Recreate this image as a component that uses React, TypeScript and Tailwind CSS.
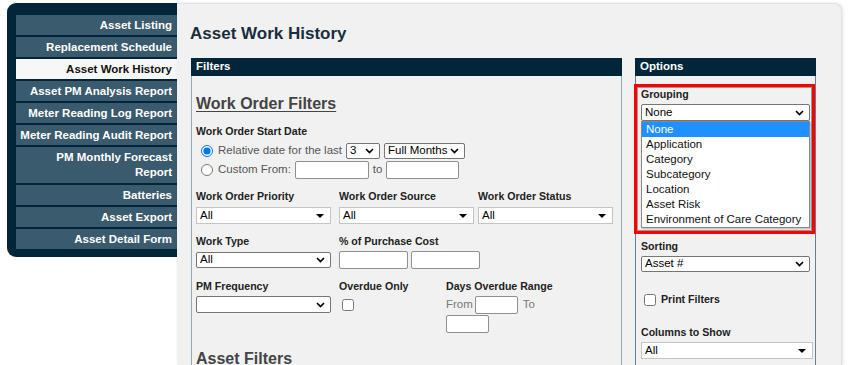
import type { ReactNode } from 'react';

const MENU = [
  'Asset Listing',
  'Replacement Schedule',
  'Asset Work History',
  'Asset PM Analysis Report',
  'Meter Reading Log Report',
  'Meter Reading Audit Report',
  'PM Monthly Forecast Report',
  'Batteries',
  'Asset Export',
  'Asset Detail Form',
];

const GROUPING = [
  'None',
  'Application',
  'Category',
  'Subcategory',
  'Location',
  'Asset Risk',
  'Environment of Care Category',
];

const Chevron = () => (
  <svg width="9" height="6" viewBox="0 0 9 6" className="shrink-0">
    <path d="M1 1l3.5 3.5L8 1" stroke="#000" strokeWidth="1.7" fill="none" />
  </svg>
);

const Triangle = () => (
  <svg width="8" height="4" viewBox="0 0 8 4" className="shrink-0">
    <path d="M0 0h8L4 4z" fill="#000" />
  </svg>
);

// native-looking chrome select with chevron
const ChevronSelect = ({ value = '', className = '' }: { value?: string; className?: string }) => (
  <div
    className={`flex items-center justify-between rounded-[2px] border border-[#767676] bg-white pl-[3px] pr-[5px] text-[11.5px] leading-none text-black ${className}`}
  >
    <span>{value}</span>
    <Chevron />
  </div>
);

// styled select with the small solid arrow
const FlatSelect = ({ value = '', className = '' }: { value?: string; className?: string }) => (
  <div
    className={`flex items-center justify-between border border-[#c4c4c4] bg-white pl-[3px] pr-[6px] text-[11.5px] leading-none text-black ${className}`}
  >
    <span>{value}</span>
    <Triangle />
  </div>
);

const TextBox = ({ className = '' }: { className?: string }) => (
  <div className={`h-[18px] rounded-[2px] border border-[#8f8f8f] bg-white ${className}`} />
);

const Label = ({ children }: { children: ReactNode }) => (
  <div className="text-[10.6px] leading-[13px] font-bold text-[#222]">{children}</div>
);

const Heading = ({ children }: { children: ReactNode }) => (
  <h2 className="text-[16px] leading-[20px] font-bold text-[#444] underline underline-offset-[2px]">{children}</h2>
);

const Sidebar = () => (
  <div className="ml-[7px] flex w-[170px] flex-col gap-[2px] self-start rounded-l-[9px] bg-[#012639] pt-[12px] pb-[8px] pl-[9px]">
    {MENU.map(item => {
      const active = item === 'Asset Work History';
      const double = item === 'PM Monthly Forecast Report';
      return (
        <div
          key={item}
          className={`flex flex-col justify-center pr-[5px] text-right text-[11.5px] font-bold whitespace-nowrap ${
            double ? 'h-[36px] leading-[15px]' : 'h-[20px] leading-[14px]'
          } ${active ? 'bg-[#f7f7f7] text-[#111]' : 'bg-[#3a5b6d] text-white'}`}
        >
          {double ? (
            <>
              <span>PM Monthly Forecast</span>
              <span>Report</span>
            </>
          ) : (
            item
          )}
        </div>
      );
    })}
  </div>
);

const FiltersPanel = () => (
  <div className="ml-[1px] flex w-[431px] flex-col">
    <div className="flex h-[18px] items-center bg-[#012639] pl-[5px] text-[11.5px] font-bold text-white">Filters</div>
    <div className="flex-1 border-x border-[#8eaabb] pl-[4px]">
      <div className="mt-[18px]">
        <Heading>Work Order Filters</Heading>
      </div>

      <div className="mt-[11px]">
        <Label>Work Order Start Date</Label>
      </div>
      <div className="mt-[5px] flex h-[16px] items-center pl-[5px] text-[11.5px] text-[#555]">
        <input type="radio" defaultChecked name="wo" className="m-0 h-[12px] w-[12px]" />
        <span className="ml-[5px]">Relative date for the last</span>
        <ChevronSelect value="3" className="ml-[4px] h-[16px] w-[34px]" />
        <ChevronSelect value="Full Months" className="ml-[4px] h-[16px] w-[81px]" />
      </div>
      <div className="mt-[2px] flex h-[18px] items-center pl-[5px] text-[11.5px] text-[#555]">
        <input type="radio" name="wo" className="m-0 h-[12px] w-[12px]" />
        <span className="ml-[5px]">Custom From:</span>
        <TextBox className="ml-[4px] w-[74px]" />
        <span className="ml-[4px]">to</span>
        <TextBox className="ml-[4px] w-[73px]" />
      </div>

      <div className="mt-[11px] grid grid-cols-[143px_139px_1fr]">
        <div>
          <Label>Work Order Priority</Label>
          <FlatSelect value="All" className="mt-[4px] h-[17px] w-[135px]" />
        </div>
        <div>
          <Label>Work Order Source</Label>
          <FlatSelect value="All" className="mt-[4px] h-[17px] w-[135px]" />
        </div>
        <div>
          <Label>Work Order Status</Label>
          <FlatSelect value="All" className="mt-[4px] h-[17px] w-[135px]" />
        </div>
      </div>

      <div className="mt-[11px] grid grid-cols-[143px_1fr]">
        <div>
          <Label>Work Type</Label>
          <ChevronSelect value="All" className="mt-[4px] h-[16px] w-[135px]" />
        </div>
        <div>
          <Label>% of Purchase Cost</Label>
          <div className="mt-[3px] flex gap-[3px]">
            <TextBox className="w-[69px]" />
            <TextBox className="w-[69px]" />
          </div>
        </div>
      </div>

      <div className="mt-[11px] grid grid-cols-[143px_107px_1fr]">
        <div>
          <Label>PM Frequency</Label>
          <ChevronSelect className="mt-[3px] h-[17px] w-[135px]" />
        </div>
        <div>
          <Label>Overdue Only</Label>
          <input type="checkbox" className="mt-[6px] ml-[3px] block h-[12px] w-[12px]" />
        </div>
        <div className="text-[11.5px] text-[#777]">
          <Label>Days Overdue Range</Label>
          <div className="mt-[3px] flex items-center">
            <span>From</span>
            <TextBox className="ml-[2px] w-[43px]" />
            <span className="ml-[5px]">To</span>
          </div>
          <TextBox className="mt-[1px] w-[43px]" />
        </div>
      </div>

      <div className="mt-[16px]">
        <Heading>Asset Filters</Heading>
      </div>
    </div>
  </div>
);

const OptionsPanel = () => (
  <div className="ml-[13px] flex w-[181px] flex-col">
    <div className="flex h-[18px] items-center bg-[#012639] pl-[5px] text-[11.5px] font-bold text-white">Options</div>
    <div className="flex-1 border-x border-[#5f8196]">
      <div className="mt-[8px] -ml-[2px] border-[3px] border-[#ff0000] pt-[1px] pr-[3px] pb-[3px] pl-[4px] shadow-[inset_0_0_0_1px_#9a9a9a]">
        <Label>Grouping</Label>
        <ChevronSelect value="None" className="mt-[3px] h-[17px] w-[169px]" />
        <div className="w-[169px] border border-[#8a8a8a] bg-white text-[11.5px] leading-[15px] text-[#111] shadow-[1px_1px_2px_rgba(0,0,0,0.25)]">
          {GROUPING.map(g => (
            <div key={g} className={`pl-[4px] ${g === 'None' ? 'bg-[#1e90ff] text-white' : ''}`}>
              {g}
            </div>
          ))}
        </div>
      </div>
      <div className="pl-[5px]">
        <div className="mt-[6px]">
          <Label>Sorting</Label>
        </div>
        <ChevronSelect value="Asset #" className="mt-[3px] h-[16px] w-[169px]" />
        <div className="mt-[21px] flex items-center pl-[3px]">
          <input type="checkbox" className="m-0 h-[12px] w-[12px]" />
          <span className="ml-[5px]">
            <Label>Print Filters</Label>
          </span>
        </div>
        <div className="mt-[20px]">
          <Label>Columns to Show</Label>
        </div>
        <FlatSelect value="All" className="mt-[3px] h-[17px] w-[172px]" />
      </div>
    </div>
  </div>
);

export default function App() {
  return (
    <div className="flex h-[365px] w-[848px] overflow-hidden bg-white pt-[3px] font-['Liberation_Sans',Arial,sans-serif]">
      <Sidebar />
      <div className="mr-[6px] flex flex-1 flex-col rounded-tr-[8px] border-t border-r border-[#e3e3e3] bg-[#f1f1f1] pl-[13px] shadow-[1px_0_3px_rgba(0,0,0,0.12)]">
        <h1 className="mt-[20px] text-[17px] leading-[20px] font-bold text-[#1b2d3c]">Asset Work History</h1>
        <div className="mt-[14px] flex flex-1">
          <FiltersPanel />
          <OptionsPanel />
        </div>
      </div>
    </div>
  );
}
